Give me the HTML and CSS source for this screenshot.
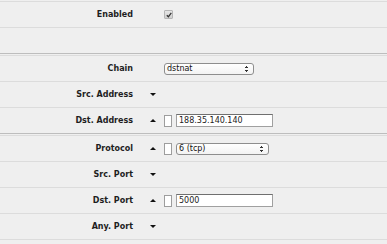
FILE: index.html
```html
<!DOCTYPE html>
<html>
<head>
<meta charset="utf-8">
<link rel="stylesheet" href="styles.css">
</head>
<body>
<div class="form">
  <div class="row">
    <div class="label">Enabled</div>
    <div class="arrow"></div>
    <div class="ctrl"><span class="check"><svg width="6" height="6" viewBox="0 0 6 6"><path d="M0.8 3.2 L2.4 4.8 L5.3 0.9" fill="none" stroke="#333" stroke-width="1.3"/></svg></span></div>
  </div>
  <div class="row">
    <div class="label"></div>
  </div>
  <div class="sep"></div>
  <div class="row">
    <div class="label">Chain</div>
    <div class="arrow"></div>
    <div class="ctrl"><span class="select w88">dstnat<span class="spin"></span></span></div>
  </div>
  <div class="row">
    <div class="label">Src. Address</div>
    <div class="arrow"><span class="tri down"></span></div>
    <div class="ctrl"></div>
  </div>
  <div class="row">
    <div class="label">Dst. Address</div>
    <div class="arrow"><span class="tri up"></span></div>
    <div class="ctrl"><span class="box"></span><span class="input">188.35.140.140</span></div>
  </div>
  <div class="sep"></div>
  <div class="row">
    <div class="label">Protocol</div>
    <div class="arrow"><span class="tri up"></span></div>
    <div class="ctrl"><span class="box"></span><span class="select w91">6 (tcp)<span class="spin"></span></span></div>
  </div>
  <div class="row">
    <div class="label">Src. Port</div>
    <div class="arrow"><span class="tri down"></span></div>
    <div class="ctrl"></div>
  </div>
  <div class="row">
    <div class="label">Dst. Port</div>
    <div class="arrow"><span class="tri up"></span></div>
    <div class="ctrl"><span class="box"></span><span class="input">5000</span></div>
  </div>
  <div class="row last">
    <div class="label">Any. Port</div>
    <div class="arrow"><span class="tri down"></span></div>
    <div class="ctrl"></div>
  </div>
</div>
</body>
</html>
```

FILE: styles.css
```css
html, body {
  margin: 0;
  padding: 0;
  background: #efefef;
}
body {
  font-family: "DejaVu Sans", Verdana, sans-serif;
  color: #1e1e1e;
  width: 387px;
  height: 244px;
  overflow: hidden;
}
.form {
  padding-top: 1px;
}
.row {
  display: flex;
  align-items: center;
  height: 25px;
  border-top: 1px solid #dcdcdc;
}
.row.last {
  border-bottom: 1px solid #dcdcdc;
}
.sep {
  height: 1px;
  border-top: 1px solid #bdbdbd;
}
.label {
  width: 133px;
  text-align: right;
  font-weight: bold;
  font-size: 8px;
  line-height: 10px;
}
.arrow {
  width: 6px;
  margin-left: 17px;
  display: flex;
  align-items: center;
  justify-content: center;
}
.ctrl {
  margin-left: 8px;
  display: flex;
  align-items: center;
  gap: 4px;
}
.tri {
  width: 0;
  height: 0;
  border-left: 3px solid transparent;
  border-right: 3px solid transparent;
}
.tri.down {
  border-top: 3px solid #111;
}
.tri.up {
  border-bottom: 3px solid #111;
}
.check {
  width: 7px;
  height: 7px;
  border: 1px solid #b5b5b5;
  border-radius: 1px;
  background: linear-gradient(#e6e6e6, #cfcfcf);
  display: flex;
  align-items: center;
  justify-content: center;
}
.box {
  width: 6px;
  height: 10px;
  border: 1px solid #9d9d9d;
  background: #fff;
}
.input {
  width: 93px;
  height: 11px;
  border: 1px solid #a0a0a0;
  border-top-color: #6f6f6f;
  background: #fff;
  font-size: 8px;
  line-height: 11px;
  padding-left: 2px;
  color: #222;
}
.select {
  position: relative;
  height: 10px;
  border: 1px solid #8e8e8e;
  border-radius: 3px;
  background: linear-gradient(#ffffff, #f3f3f3);
  font-size: 8px;
  line-height: 10px;
  padding-left: 2px;
  color: #111;
  box-sizing: content-box;
}
.w88 { width: 86px; }
.w91 { width: 89px; }
.spin {
  position: absolute;
  right: 5px;
  top: 2px;
  width: 3px;
  height: 6px;
  background:
    linear-gradient(#333, #333) center 0 / 1px 1px no-repeat,
    linear-gradient(#333, #333) center 1px / 3px 1px no-repeat,
    linear-gradient(#333, #333) center 4px / 3px 1px no-repeat,
    linear-gradient(#333, #333) center 5px / 1px 1px no-repeat;
}
```
